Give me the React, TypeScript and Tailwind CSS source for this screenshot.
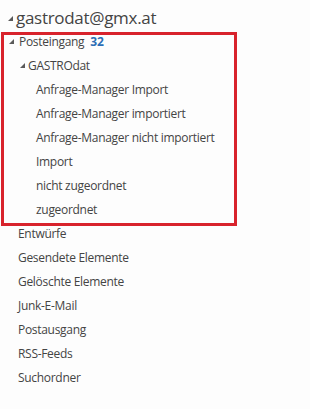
import React from 'react';

const Tri = ({ className = '', size = 5 }: { className?: string; size?: number }) => (
  <svg width={size} height={size} viewBox="0 0 5 5" className={className}>
    <polygon points="5,0 5,5 0,5" fill="#5a5a5a" />
  </svg>
);

const subFolders = [
  'Anfrage-Manager Import',
  'Anfrage-Manager importiert',
  'Anfrage-Manager nicht importiert',
  'Import',
  'nicht zugeordnet',
  'zugeordnet',
];

const topFolders = [
  'Entwürfe',
  'Gesendete Elemente',
  'Gelöschte Elemente',
  'Junk-E-Mail',
  'Postausgang',
  'RSS-Feeds',
  'Suchordner',
];

export default function App() {
  return (
    <div
      className="relative w-[310px] h-[409px] bg-[#fdfdfd] text-[#444444] overflow-hidden text-[12px] tracking-[-0.3px]"
      style={{ fontFamily: '"Open Sans", "Noto Sans", sans-serif' }}
    >
      {/* Account header */}
      <div className="flex items-center h-[30px] pt-[6px] pl-[8px]">
        <Tri size={5} className="mr-[3px] mt-[1px]" />
        <span className="text-[17px] tracking-[-0.3px]">gastrodat@gmx.at</span>
      </div>

      {/* Posteingang */}
      <div className="flex items-center h-[24px] pl-[9px]">
        <Tri className="mr-[5px] -mt-[2px]" />
        <span>Posteingang</span>
        <span className="font-bold text-[#2c6eb5] ml-[6px]">32</span>
      </div>

      {/* GASTROdat */}
      <div className="flex items-center h-[24px] pl-[20px]">
        <Tri className="mr-[3px] -mt-[2px]" />
        <span>GASTROdat</span>
      </div>

      {subFolders.map((f) => (
        <div key={f} className="flex items-center h-[24px] pl-[36px]">
          {f}
        </div>
      ))}

      {topFolders.map((f) => (
        <div key={f} className="flex items-center h-[24px] pl-[18px]">
          {f}
        </div>
      ))}

      {/* highlight box */}
      <div className="absolute left-[1px] top-[32px] w-[236px] h-[194px] border-[3px] border-[#d8232c] pointer-events-none" />
    </div>
  );
}
